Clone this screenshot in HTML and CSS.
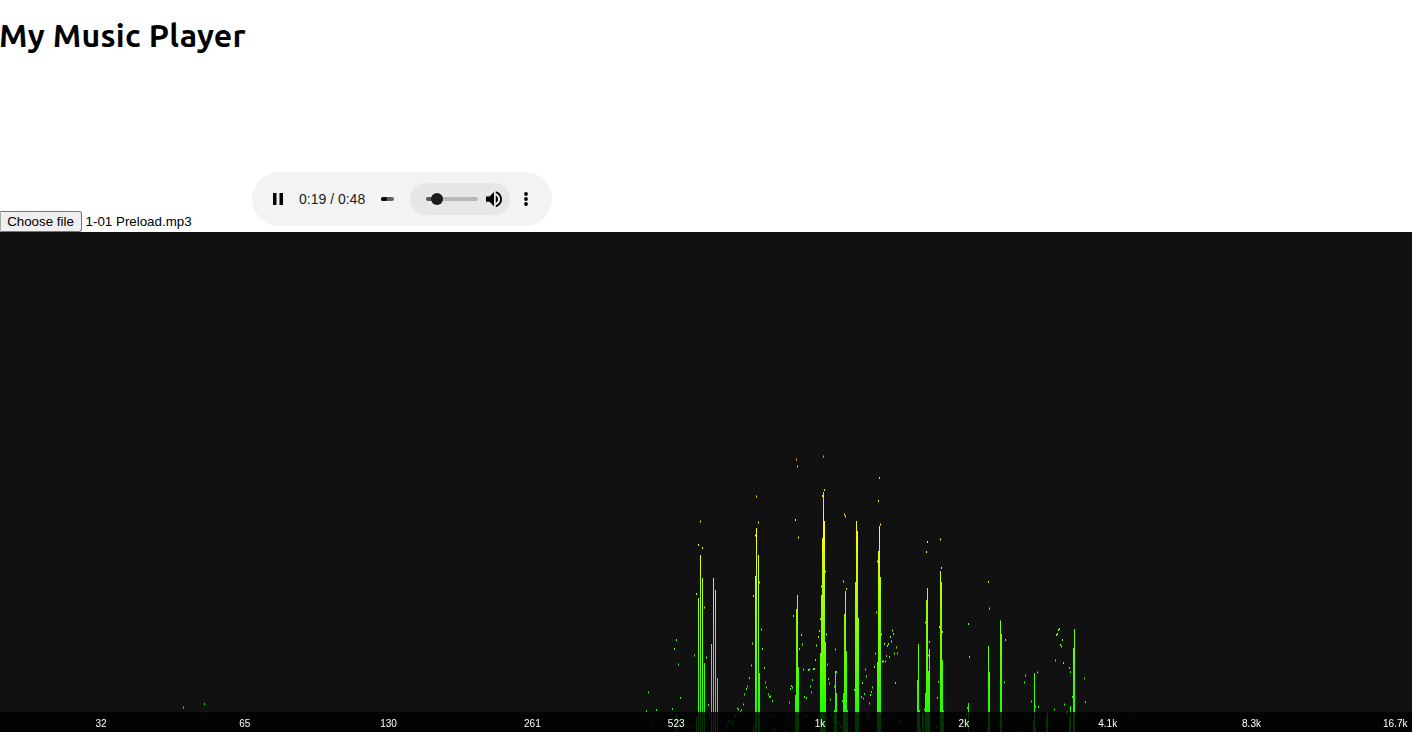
FILE: index.html
```html
<!DOCTYPE html>
<html lang="en">
<head>
<meta charset="utf-8">
<title>My Music Player</title>
<link rel="stylesheet" href="styles.css">
</head>
<body>
<header class="header"><h1 class="title">My Music Player</h1></header>
<div class="controls">
  <div class="picker">
    <button class="choose" type="button">Choose file</button>
    <span class="filename">1-01 Preload.mp3</span>
  </div>
  <div class="player">
    <svg class="pause" width="10" height="12" viewBox="0 0 10 12"><path d="M0 0h3.5v12H0zM6.500 0H10v12H6.500z"/></svg>
    <span class="time">0:19 / 0:48</span>
    <div class="timeline"><div class="elapsed"></div></div>
    <div class="volume">
      <svg width="100" height="32" viewBox="0 0 100 32">
        <rect x="16" y="14" width="52" height="4" rx="2" fill="#b8b9ba"/>
        <rect x="16" y="14" width="14" height="4" rx="2" fill="#5c5d5e"/>
        <circle cx="27" cy="16" r="6" fill="#1b1b1b"/>
        <g transform="translate(73.300 5.500) scale(.89)"><path d="M3 9v6h4l5 5V4L7 9H3zm13.500 3c0-1.770-1.020-3.290-2.500-4.030v8.050c1.480-.730 2.500-2.250 2.500-4.020zM14 3.230v2.060c2.890.860 5 3.540 5 6.710s-2.110 5.850-5 6.710v2.060c4.010-.910 7-4.490 7-8.770s-2.990-7.860-7-8.770z"/></g>
      </svg>
    </div>
    <svg class="more" width="4" height="14" viewBox="0 0 4 14"><circle cx="2" cy="2" r="1.900"/><circle cx="2" cy="7" r="1.900"/><circle cx="2" cy="12" r="1.900"/></svg>
  </div>
</div>
<div class="analyzer">
  <canvas class="spectrum" id="spectrum" width="1412" height="500"></canvas>
  <svg class="scale" width="1412" height="20" viewBox="0 0 1412 20">
    <text x="101" y="15">32</text><text x="244.800" y="15">65</text><text x="388.600" y="15">130</text><text x="532.400" y="15">261</text><text x="676.200" y="15">523</text><text x="820" y="15">1k</text><text x="963.900" y="15">2k</text><text x="1107.700" y="15">4.1k</text><text x="1251.500" y="15">8.3k</text><text x="1395.300" y="15">16.7k</text>
  </svg>
</div>
<script src="spectrum.js"></script>
</body>
</html>
```
FILE: styles.css
```css
body {
  margin: 0;
  background: #fff;
  color: #000;
  font-family: "Liberation Sans", Arial, sans-serif;
}
.header {
  height: 172px;
}
.title {
  margin: 0 0 0 -1px;
  padding-top: 13px;
  font: bold 32px/44px Ubuntu, "Noto Sans", sans-serif;
  letter-spacing: 0.25px;
  white-space: nowrap;
}
.controls {
  display: flex;
  height: 60px;
}
.picker {
  display: flex;
  align-items: flex-end;
  width: 252px;
  gap: 4px;
}
.choose {
  box-sizing: border-box;
  width: 82px;
  height: 21px;
  margin: 0;
  padding: 0 1px 0 0;
  border: 1px solid #767676;
  border-left-color: #aaa;
  border-radius: 0 3px 3px 0;
  background: #efefef;
  color: #000;
  font: 13.333px/15px "Liberation Sans", Arial, sans-serif;
}
.filename {
  margin-left: -0.4px;
  font-size: 13.333px;
  line-height: 21px;
}
.player {
  display: flex;
  align-items: center;
  box-sizing: border-box;
  width: 300px;
  height: 54px;
  padding-left: 21px;
  border-radius: 27px;
  background: #f1f3f4;
}
.time {
  width: 82px;
  margin-left: 16px;
  color: #202122;
  font-size: 14px;
  line-height: 20px;
  white-space: nowrap;
}
.timeline {
  width: 13px;
  height: 4px;
  border-radius: 2px;
  background: #606162;
}
.elapsed {
  width: 6px;
  height: 4px;
  border-radius: 2px;
  background: #000;
}
.volume {
  width: 100px;
  height: 32px;
  margin-left: 16px;
  border-radius: 16px;
  background: #e6e7e8;
}
.volume svg, .spectrum, .scale {
  display: block;
}
.more {
  margin-left: 14px;
}
.analyzer {
  display: grid;
  width: 1412px;
  height: 500px;
  background: #111;
}
.spectrum, .scale {
  grid-area: 1 / 1;
}
.scale {
  align-self: end;
  background: rgba(0, 0, 0, 0.8);
  fill: #fff;
  font: 10px "Liberation Sans", Arial, sans-serif;
  text-anchor: middle;
}
```
FILE: spectrum.js
```js
const canvas = document.getElementById('spectrum');
const ctx = canvas.getContext('2d');
const TOP = 232;

// Level of each active frequency column: [x, top]
const bars = [
  [676,714],[696,717],[698,598],[700,555],[702,578],[704,663],[711,644],[713,578],[715,590],[717,678],
  [753,725],[755,576],[756,528],[758,555],[759,673],
  [795,695],[796,609],[797,595],[798,667],
  [820,653],[821,595],[822,538],[823,492],[824,521],[825,642],
  [834,710],[835,671],[836,693],[843,693],[844,614],[845,591],[846,651],[847,710],
  [855,582],[856,521],[857,531],[858,618],[877,662],[878,551],[879,526],[880,577],
  [917,680],[918,644],[919,710],[920,729],[922,713],[923,713],[925,693],[926,600],[927,588],[928,671],[929,649],
  [940,571],[941,582],[942,660],[943,712],[968,703],[988,646],[989,672],[1000,621],[1001,634],
  [1033,720],[1034,673],[1035,727],[1046,716],[1047,712],[1069,717],[1070,706],[1073,648],[1074,629]
];

// Held peaks: [x, top]
const peaks = [
  [183,706.5],[204,703],
  [700,520.5],[698,544],[702,547],[756,495.5],[758,521.5],[755,534.5],[759,581.5],
  [696,593],[704,606.5],[753,595],[676,639],[674,648],[678,663.5],[680,697],[694,654.5],[706,656.5],
  [648,691.5],[646,710],[656,709],[672,708],[708,704],[761,628.5],[752,642.5],[762,648],[751,664.5],
  [764,667],[749,677],[765,681.5],[747,685.5],[746,688],[766,686.5],[744,693.5],[768,693.5],[769,696],
  [743,703.5],[737,707.5],[738,708.5],[741,709],[740,711],[658,717.5],[651,724.5],[709,712.5],
  [735,715],[728,720.5],[730,720.5],[733,720.5],[732,722.5],[727,725],[692,726],[725,728.5],[690,730.5],
  [796,458.5],[797,465.5],[795,519],[798,536.5],[823,455.5],[824,489],[822,495],[825,570.5],[821,585.5],
  [844,513.5],[845,515.5],[843,580.5],[846,588],[879,477],[878,500],[880,523.5],[877,560.5],
  [793,615],[801,634],[802,643.5],[799,648],[803,668.5],[820,618],[819,630],[818,636],[816,644.5],
  [826,633.5],[815,659],[813,668],[814,668],[808,669],[809,668.5],[812,679],[810,685.5],[811,691.5],
  [827,663.5],[828,678],[829,682.5],[830,698.500],[804,696],[806,697],[791,685],[792,686.5],[790,688],
  [770,695.5],[772,700],[789,701.5],[835,648.5],[836,671],[834,685.500],[876,611.5],[881,633.5],
  [892,629.5],[893,633],[890,636],[891,640.5],[888,643],[887,645],[884,643],[896,646.5],
  [886,655],[889,656],[882,660.500],[883,660.500],[885,660.500],[894,652.5],[897,652.5],[895,682],[875,652.5],
  [865,668.500],[874,666],[866,675.5],[862,682],[872,686.5],[871,691],[864,693],[870,694],[854,689],
  [861,696],[863,697.5],[842,700],[869,702.500],[773,715],[787,715.5],[805,715],[786,724.5],[785,729.5],[774,728],
  [831,713.5],[832,717],[833,721],[839,722.500],[841,725],[840,726],[868,712],[867,716.5],
  [927,541],[926,551],[940,538.5],[941,567],[925,621.5],[939,626],[988,581],[989,607.5],[968,623],[1000,620.5],
  [942,631],[929,641],[928,654.5],[938,681],[937,697],[924,708.5],[943,710.5],[969,656],[967,707],
  [1005,639],[1004,681.5],[936,726],[966,712.5],[987,728],[999,721.5],[900,720],
  [1059,628],[1058,629],[1057,633],[1056,634],[1062,639],[1060,644],[1061,645.5],[1055,659.5],[1063,662],
  [1069,667],[1070,671],[1037,671.500],[1025,674.5],[1024,681.5],[1031,700.500],[1038,706],[1035,705.5],
  [1054,708.500],[1064,703.500],[1072,696],[1084,677.5],[1085,701],[1066,712],[1067,711.5],[1023,731],[1130,713.500]
];

ctx.fillStyle = '#111';
ctx.fillRect(0, 0, 1412, 500);
const gradient = ctx.createLinearGradient(0, 0, 0, 500);
gradient.addColorStop(0, '#f00');
gradient.addColorStop(0.6, '#ff0');
gradient.addColorStop(1, '#0f0');
ctx.fillStyle = gradient;
for (const [x, top] of bars) ctx.fillRect(x, top - TOP, 1, 732 - top);
for (const [x, top] of peaks) ctx.fillRect(x, top - TOP, 1, 2);
```
